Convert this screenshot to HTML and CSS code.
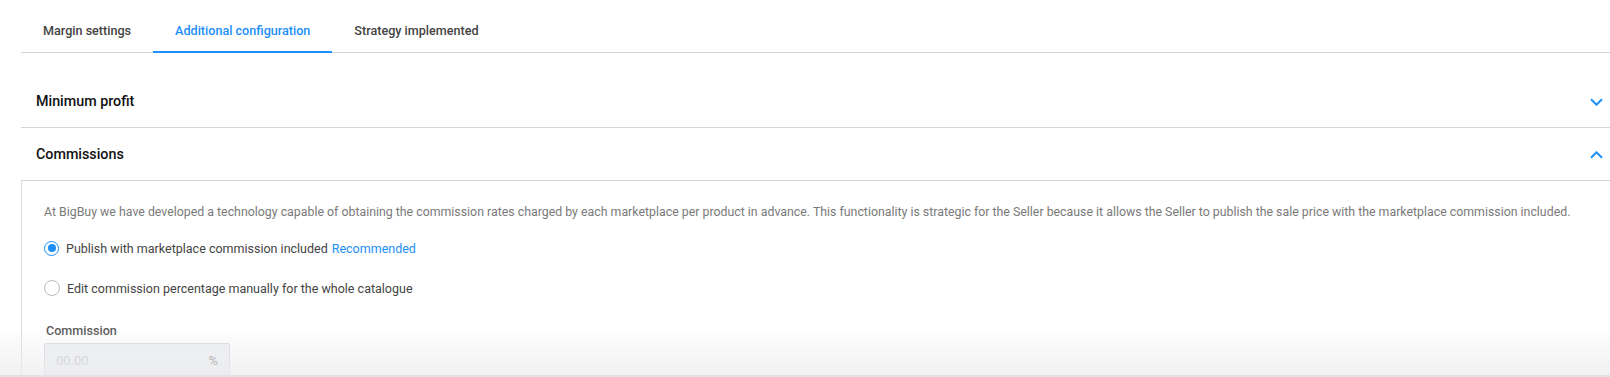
FILE: index.html
```html
<!DOCTYPE html>
<html lang="en">
<head>
    <meta charset="UTF-8">
    <meta name="viewport" content="width=device-width, initial-scale=1.0">
    <title>Additional configuration</title>
    <link rel="stylesheet" href="styles.css">
</head>
<body>
    <div class="page">
        <nav class="tabs">
            <a class="tab">Margin settings</a>
            <a class="tab active">Additional configuration</a>
            <a class="tab">Strategy implemented</a>
        </nav>

        <div class="accordion">
            <div class="acc-item">
                <div class="acc-head">
                    <span>Minimum profit</span>
                    <svg class="chevron" width="13" height="8" viewBox="0 0 13 8"><path d="M1 1.2l5.5 5.5 5.5-5.5" fill="none" stroke="currentColor" stroke-width="2"/></svg>
                </div>
            </div>

            <div class="acc-item open">
                <div class="acc-head">
                    <span>Commissions</span>
                    <svg class="chevron" width="13" height="8" viewBox="0 0 13 8"><path d="M1 6.8l5.5-5.5 5.5 5.5" fill="none" stroke="currentColor" stroke-width="2"/></svg>
                </div>
                <div class="acc-body">
                    <p class="intro">At BigBuy we have developed a technology capable of obtaining the commission rates charged by each marketplace per product in advance. This functionality is strategic for the Seller because it allows the Seller to publish the sale price with the marketplace commission included.</p>

                    <label class="radio">
                        <span class="dot checked"></span>
                        Publish with marketplace commission included <span class="tag">Recommended</span>
                    </label>
                    <label class="radio">
                        <span class="dot"></span>
                        Edit commission percentage manually for the whole catalogue
                    </label>

                    <div class="field">
                        <div class="field-label">Commission</div>
                        <div class="input">
                            <span class="placeholder">00.00</span>
                            <span class="unit">%</span>
                        </div>
                    </div>
                </div>
            </div>
        </div>
    </div>
    <div class="fade"></div>
</body>
</html>
```

FILE: styles.css
```css
body {
    margin: 0;
    font-family: Roboto, "Liberation Sans", sans-serif;
    background: #fff;
    color: #333;
    overflow: hidden;
}

.page {
    margin-left: 21px;
}

.tabs {
    display: flex;
    height: 52px;
    border-bottom: 1px solid #d3d3da;
}

.tab {
    padding: 0 22px;
    font-size: 12.6px;
    font-weight: 500;
    color: #444;
    line-height: 61px;
    box-sizing: border-box;
    height: 53px;
}
.tab.active {
    color: #1e8ff7;
    border-bottom: 2px solid #1e8ff7;
}

.accordion {
    margin-top: 22px;
}

.acc-item {
    border-bottom: 1px solid #d6d6d6;
}

.acc-head {
    height: 52px;
    display: flex;
    align-items: center;
    justify-content: space-between;
    padding: 0 7px 0 15px;
    font-size: 14.3px;
    font-weight: 500;
    color: #111;
}

.chevron {
    color: #1e8ff7;
    margin-top: 1px;
}

.acc-item.open {
    border-bottom: none;
}
.acc-item.open .acc-head {
    border-bottom: 1px solid #d6d6d6;
}

.acc-body {
    border-left: 1px solid #dcdcdc;
    padding: 23px 0 40px 22px;
}

.intro {
    margin: 0 0 8px;
    font-size: 12.35px;
    font-weight: 400;
    color: #7a7a7a;
    line-height: 16px;
}

.radio {
    display: flex;
    align-items: center;
    gap: 7px;
    height: 40px;
    font-size: 12.5px;
    color: #444;
}
.radio .tag {
    color: #1e8ff7;
    margin-left: -3px;
}

.dot {
    width: 14px;
    height: 14px;
    border: 1px solid #b9b9c0;
    border-radius: 50%;
    display: flex;
    align-items: center;
    justify-content: center;
}
.dot.checked {
    border: 1.5px solid #1e8ff7;
    width: 13px;
    height: 13px;
}
.dot.checked::after {
    content: "";
    width: 8px;
    height: 8px;
    border-radius: 50%;
    background: #1e8ff7;
}

.field {
    margin-top: 15px;
}
.field-label {
    font-size: 12.6px;
    font-weight: 500;
    color: #555;
    margin-left: 2px;
    margin-bottom: 5px;
}
.input {
    width: 186px;
    height: 34px;
    box-sizing: border-box;
    border: 1px solid #d6d9dd;
    border-radius: 2px;
    background: #eef0f3;
    display: flex;
    align-items: center;
    justify-content: space-between;
    padding: 0 11px 0 11px;
    font-size: 13px;
}
.placeholder {
    color: #bfc3c8;
}
.unit {
    color: #777;
}

.fade {
    position: fixed;
    left: 0;
    right: 0;
    bottom: 0;
    height: 48px;
    background: linear-gradient(rgba(240, 240, 242, 0), rgba(236, 236, 238, 0.75));
    border-bottom: 2px solid #e1e1e6;
}
```
